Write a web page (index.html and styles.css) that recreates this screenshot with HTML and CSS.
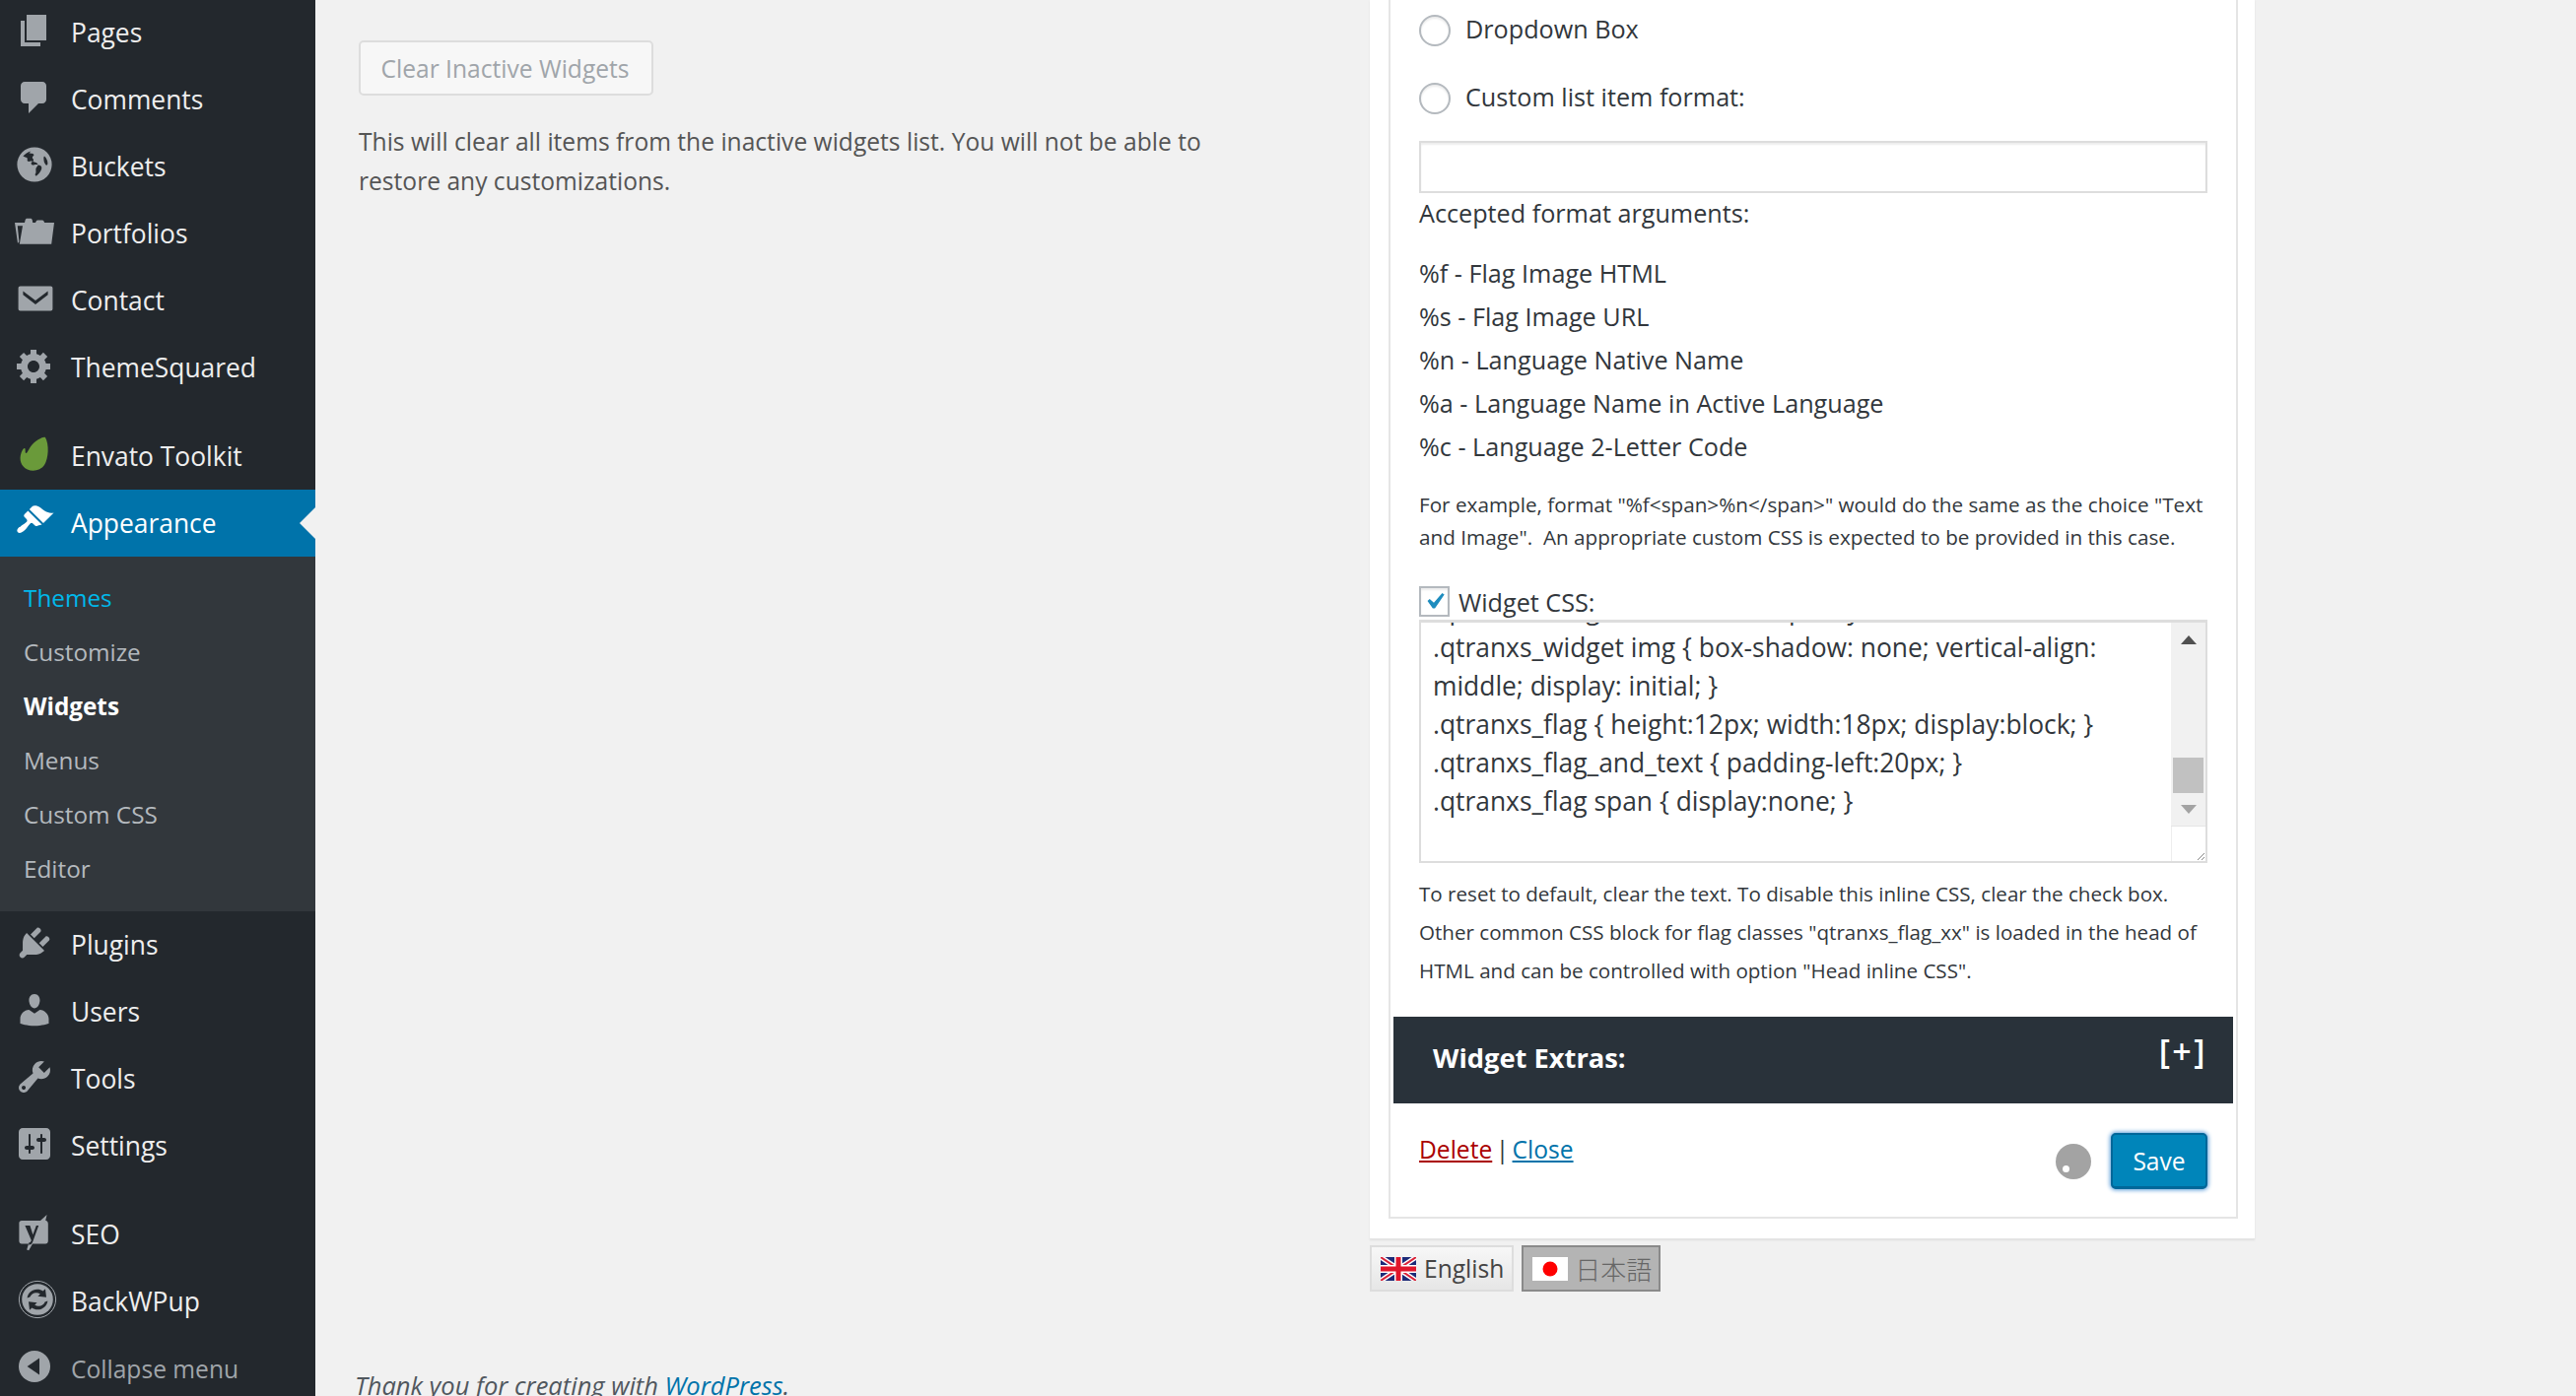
FILE: index.html
```html
<!DOCTYPE html>
<html lang="en">
<head>
<meta charset="utf-8">
<title>Widgets</title>
<link rel="stylesheet" href="styles.css">
</head>
<body>
<div class="page">
  <nav class="sidebar">
    <a class="item"><svg class="ic" viewBox="0 0 20 20"><path d="M6 15V2h10v13H6zm-1 1h8v2H3V5h2v11z"/></svg><span>Pages</span></a>
    <a class="item"><svg class="ic" viewBox="0 0 20 20"><path d="M5 2h9c1.1 0 2 .9 2 2v7c0 1.1-.9 2-2 2h-2l-5 5v-5H5c-1.1 0-2-.9-2-2V4c0-1.1.9-2 2-2z"/></svg><span>Comments</span></a>
    <a class="item"><svg class="ic" viewBox="0 0 20 20"><path fill-rule="evenodd" d="M10 1.2a8.8 8.8 0 1 1 0 17.6 8.8 8.8 0 0 1 0-17.6zM8.2 3.2C6.6 3.6 5.2 4.5 4.2 5.8c.6.5 1.5.4 2 .8.6.5-.2 1.2.3 1.7.7.6 1.500-.4 2.300.1.9.5 2.300.4 2.800 1.300.5 1-.8 1.500-.9 2.500-.1.9.3 1.800-.3 2.600-.2.4.1 1.200.6.900 1.200-.8 2-2 2.500-3.200.2-.7.300-1.500-.4-1.900-1-.5-2.400-.9-3.400-.4-.7.3-1.500-.3-1.400-1 .1-.6 1-.6 1.200-1.200.2-.7-.7-1-.6-1.700.1-.6.900-.6.800-1.300-.1-.6-1.900-.7-2.500-.8zM15 5.800c-.6.600-.2 1.600-.2 2.400.1.800.7 1.400 1 2.100.5.300.9-.3.900-.8 0-1.400-.6-2.700-1.700-3.700z"/></svg><span>Buckets</span></a>
    <a class="item"><svg class="ic" viewBox="0 0 20 20"><path d="M0 5.500h5l.3-1.300c.1-.5.500-.8 1-.8h1.600c.5 0 .9.300 1 .8l.2 1.300h1.400l.3-.6c.2-.4.500-.6.900-.6h2.200c.4 0 .7.200.9.600l.3.600H20l-1.400 10.900H2.400L4 7.100H1.400l.8 8-.7.9z"/></svg><span>Portfolios</span></a>
    <a class="item"><svg class="ic" viewBox="0 0 20 20"><path d="M2.800 3.800h15.400c.6 0 1 .4 1 1v10.400c0 .6-.4 1-1 1H2.800c-.6 0-1-.4-1-1V4.800c0-.6.400-1 1-1zM4.200 6.200 10.500 11l6.300-4.800v1.900L10.500 13 4.200 8.100z" fill-rule="evenodd"/></svg><span>Contact</span></a>
    <a class="item"><svg class="ic" viewBox="0 0 20 20"><path d="M18 12h-2.180c-.17.7-.44 1.350-.81 1.930l1.540 1.540-2.100 2.100-1.540-1.540c-.58.36-1.230.63-1.910.79V19H8v-2.180c-.68-.16-1.330-.43-1.910-.79l-1.540 1.540-2.120-2.120 1.540-1.540c-.36-.58-.63-1.230-.79-1.910H1V9.030h2.170c.16-.7.44-1.350.8-1.940L2.430 5.550l2.100-2.100 1.540 1.540c.58-.37 1.240-.64 1.930-.81V2h3v2.180c.68.16 1.330.43 1.910.79l1.540-1.540 2.120 2.120-1.540 1.540c.36.59.64 1.240.8 1.940H18V12zm-8.500 1.500c1.660 0 3-1.340 3-3s-1.340-3-3-3-3 1.340-3 3 1.340 3 3 3z"/></svg><span>ThemeSquared</span></a>
    <a class="item item-sep"><svg class="ic ic-leaf" viewBox="0 0 20 20"><path d="M15.500 1.500c2 3.500 1.700 10.700-.5 14-1.700 2.600-5.600 3.600-8.600 2.200C3.200 16.200 2 12.800 3.300 9.200c.5-1.300 1.200-2.300 1.700-2.200.6.100.1 2.400.7 2.500.9 0 1.500-2.900 4-5.200 1.800-1.600 4.700-3.500 5.800-2.800z"/></svg><span>Envato Toolkit</span></a>
    <a class="item item-current"><svg class="ic" viewBox="0 0 20 20"><path d="M14.480 11.060L7.410 3.990l1.500-1.500c.5-.56 2.300-.47 3.510.32 1.210.8 1.430 1.280 2.910 2.100 1.180.64 2.450 1.260 4.450.85zm-.71.71L6.700 4.700 4.930 6.470c-.39.39-.39 1.020 0 1.410l1.060 1.060c.39.39.39 1.030 0 1.420-.6.6-1.430 1.110-2.210 1.690-.35.26-.7.53-1.010.84C1.430 13.230.76 14.860 1.530 15.640c.77.78 2.400.1 3.740-1.230.32-.31.59-.66.85-1.010.58-.78 1.090-1.610 1.690-2.210.39-.39 1.020-.39 1.410 0l1.060 1.060c.39.39 1.020.39 1.410 0z"/></svg><span>Appearance</span><i class="notch"></i></a>
    <div class="submenu">
      <a class="sub sub-link">Themes</a>
      <a class="sub">Customize</a>
      <a class="sub sub-on">Widgets</a>
      <a class="sub">Menus</a>
      <a class="sub">Custom CSS</a>
      <a class="sub">Editor</a>
    </div>
    <a class="item"><svg class="ic" viewBox="0 0 20 20"><path d="M13.110 4.360L9.870 7.600 8 5.730l3.240-3.240c.35-.34 1.050-.2 1.560.32.52.51.66 1.210.31 1.550zm-8 1.770l.91-1.120 9.010 9.010-1.190.84c-.71.71-2.630 1.160-3.820 1.160H6.140L4.900 17.260c-.59.59-1.540.59-2.120 0-.59-.58-.59-1.530 0-2.120l1.240-1.240v-3.880c0-1.130.4-3.190 1.090-3.890zm7.260 3.970l3.240-3.240c.34-.35 1.040-.21 1.550.31.52.51.66 1.210.31 1.550l-3.240 3.250z"/></svg><span>Plugins</span></a>
    <a class="item"><svg class="ic" viewBox="0 0 20 20"><path d="M10 9.250c-2.270 0-2.730-3.440-2.730-3.440C7 4.020 7.820 2 9.970 2c2.160 0 2.980 2.020 2.710 3.810 0 0-.41 3.440-2.680 3.440zm0 2.570L12.720 10c2.390 0 4.520 2.330 4.520 4.530v2.490s-3.650 1.130-7.240 1.130c-3.650 0-7.240-1.130-7.240-1.130v-2.490c0-2.250 1.940-4.480 4.470-4.480z"/></svg><span>Users</span></a>
    <a class="item"><svg class="ic" viewBox="0 0 20 20"><path d="M16.680 9.770c-1.340 1.340-3.300 1.670-4.950.99l-5.410 6.520c-.99.99-2.590.99-3.580 0s-.99-2.590 0-3.570l6.520-5.420c-.68-1.650-.35-3.610.99-4.950 1.280-1.280 3.120-1.620 4.720-1.060l-2.890 2.890 2.820 2.820 2.860-2.870c.53 1.580.18 3.390-1.080 4.650zM3.810 16.210c.4.390 1.040.39 1.430 0 .4-.4.4-1.040 0-1.430-.39-.4-1.030-.4-1.430 0-.39.390-.39 1.030 0 1.430z"/></svg><span>Tools</span></a>
    <a class="item"><svg class="ic" viewBox="0 0 20 20"><path d="M18 16V4c0-1.100-.9-2-2-2H4c-1.100 0-2 .9-2 2v12c0 1.100.9 2 2 2h12c1.100 0 2-.9 2-2zM8 11h1c.55 0 1 .45 1 1s-.45 1-1 1H8v1.500c0 .28-.22.5-.5.5s-.5-.22-.5-.5V13H6c-.55 0-1-.45-1-1s.45-1 1-1h1V5.500c0-.28.22-.5.5-.5s.5.22.5.5V11zm5-2h-1c-.55 0-1-.45-1-1s.45-1 1-1h1V5.500c0-.28.22-.5.5-.5s.5.22.5.5V7h1c.55 0 1 .45 1 1s-.45 1-1 1h-1v5.500c0 .28-.22.5-.5.5s-.5-.22-.5-.5V9z"/></svg><span>Settings</span></a>
    <a class="item item-sep"><svg class="ic" viewBox="0 0 20 20"><path d="M3.500 4h9.500L16.300 1l-.7 2.900c.9.200 1.300.8 1.300 1.700v8.800c0 .8-.5 1.300-1.300 1.300H9l-1.900 3.400-1-.3.900-3.100H3.500c-.8 0-1.300-.5-1.300-1.300V5.300C2.200 4.500 2.700 4 3.500 4z"/><path class="cut" d="M5.200 6.500h2.500l1.500 4.600 1.700-4.600h1.200l-3 8.300c-.4 1.100-1 1.500-2 1.400v-1c.7 0 1.100-.5 1.300-1.200L5.200 6.500z"/></svg><span>SEO</span></a>
    <a class="item"><svg class="ic ic-bwp" viewBox="0 0 20 20"><circle class="ring" cx="10" cy="10" r="9.300"/><circle cx="10" cy="10" r="7.900"/><path class="cut" d="M4.800 9.300c.3-2.600 2.600-4.500 5.200-4.400 1 0 2 .3 2.800.9l1.200-1.200.5 4.300-4.300-.5 1.200-1.200c-.6-.4-1.300-.6-2-.6-1.500 0-2.800 1-3.200 2.200zM15.200 10.700c-.3 2.600-2.600 4.500-5.200 4.400-1 0-2-.3-2.800-.9L6 15.400l-.5-4.300 4.300.5-1.200 1.200c.6.400 1.300.6 2 .6 1.500 0 2.800-1 3.200-2.200z"/></svg><span>BackWPup</span></a>
    <a class="item item-collapse"><svg class="ic" viewBox="0 0 20 20"><circle cx="10" cy="10" r="8"/><path class="cut" d="M12.500 5.800v8.400L6.300 10z"/></svg><span>Collapse menu</span></a>
  </nav>

  <main class="content">
    <div class="columns">
      <section class="left">
        <button class="btn-clear" type="button">Clear Inactive Widgets</button>
        <p class="clear-note">This will clear all items from the inactive widgets list. You will not be able to<br>restore any customizations.</p>
      </section>
      <section class="right">
        <div class="outer">
          <div class="inner">
            <div class="form">
              <label class="radio-row"><i class="radio"></i><span class="lift">Dropdown Box</span></label>
              <label class="radio-row radio-row-2"><i class="radio"></i><span class="lift">Custom list item format:</span></label>
              <div class="text-input"></div>
              <p class="accepted">Accepted format arguments:</p>
              <ul class="args">
                <li>%f - Flag Image HTML</li>
                <li>%s - Flag Image URL</li>
                <li>%n - Language Native Name</li>
                <li>%a - Language Name in Active Language</li>
                <li>%c - Language 2-Letter Code</li>
              </ul>
              <p class="example">For example, format "%f&lt;span&gt;%n&lt;/span&gt;" would do the same as the choice "Text<br>and Image".&nbsp; An appropriate custom CSS is expected to be provided in this case.</p>
              <label class="check-row"><i class="checkbox"><svg viewBox="0 0 20 20"><path d="M14.830 4.890l1.340.94-5.810 8.380H9.020L5.780 9.670l1.340-1.250 2.570 2.400z"/></svg></i>Widget CSS:</label>
              <div class="code">
                <div class="code-pane">
                  <div class="code-text">.qtranxs_widget ul li:hover { opacity: 1; }<br>.qtranxs_widget img { box-shadow: none; vertical-align:<br>middle; display: initial; }<br>.qtranxs_flag { height:12px; width:18px; display:block; }<br>.qtranxs_flag_and_text { padding-left:20px; }<br>.qtranxs_flag span { display:none; }</div>
                </div>
                <div class="scroll">
                  <div class="track">
                    <i class="tri tri-up"></i>
                    <i class="thumb"></i>
                    <i class="tri tri-down"></i>
                  </div>
                  <div class="corner"><svg viewBox="0 0 14 14"><path d="M13 6 6 13M13 10l-3 3"/></svg></div>
                </div>
              </div>
              <p class="hint">To reset to default, clear the text. To disable this inline CSS, clear the check box.<br>Other common CSS block for flag classes "qtranxs_flag_xx" is loaded in the head of<br>HTML and can be controlled with option "Head inline CSS".</p>
            </div>
            <div class="extras"><span class="extras-title">Widget Extras:</span><span class="extras-toggle">[+]</span></div>
            <div class="actions">
              <div class="links"><a class="del">Delete</a> | <a class="close">Close</a></div>
              <div class="save-wrap"><i class="spinner"><b></b></i><button class="btn-save" type="button">Save</button></div>
            </div>
          </div>
        </div>
        <div class="langs">
          <a class="lang">
            <svg class="flag" viewBox="0 0 36 24"><rect width="36" height="24" fill="#1c2a78"/><path d="M0 0l36 24M36 0L0 24" stroke="#fff" stroke-width="5"/><path d="M0 0l36 24M36 0L0 24" stroke="#d9233a" stroke-width="2"/><path d="M18 0v24M0 12h36" stroke="#fff" stroke-width="8"/><path d="M18 0v24M0 12h36" stroke="#e0162b" stroke-width="5"/></svg>English</a>
          <a class="lang lang-on">
            <svg class="flag" viewBox="0 0 36 24"><rect width="36" height="24" fill="#fff"/><circle cx="18" cy="12" r="7.500" fill="#f00"/></svg><span class="ja">日本語</span></a>
        </div>
      </section>
    </div>
    <footer class="foot">Thank you for creating with <a>WordPress</a>.</footer>
  </main>
</div>
</body>
</html>
```
FILE: styles.css
```css
* { box-sizing: border-box; }
html, body { margin: 0; height: 100%; overflow: hidden; }
body { background: #f1f1f1; color: #444; font-family: "Open Sans", "Noto Sans", "Liberation Sans", sans-serif; font-size: 24.6px; }
p, ul { margin: 0; padding: 0; list-style: none; }
i { display: block; font-style: normal; }
.page { display: flex; height: 1417px; }

.sidebar { width: 320px; flex: none; background: #23282d; margin-top: -1px; height: 1418px; overflow: hidden; }
.item { position: relative; display: flex; align-items: center; height: 68px; padding-left: 15px; gap: 17px; color: #eee; font-size: 26.4px; }
.ic { width: 40px; height: 40px; flex: none; fill: #a0a5aa; margin-top: -4px; }
.ic .cut { fill: #23282d; }
.ic-leaf { fill: #6a9a3a; }
.ic-bwp { margin-left: 3px; margin-right: -3px; }
.ic-bwp .ring { fill: none; stroke: #a0a5aa; stroke-width: .5; }
.item-sep { margin-top: 22px; }
.item-current { background: #0073aa; color: #fff; }
.item-current .ic { fill: #fff; }
.notch { position: absolute; right: 0; top: 18px; border: 16px solid transparent; border-right-color: #f1f1f1; border-left-width: 0; }
.item-collapse { color: #a0a5aa; font-size: 24.6px; }
.submenu { background: #32373c; padding: 14px 0 16px; }
.sub { display: block; height: 55px; line-height: 55px; padding-left: 24px; color: #b4b9be; font-size: 24.3px; }
.sub-link { color: #00b9eb; }
.sub-on { color: #fff; font-weight: 700; }

.content { flex: 1; min-width: 0; display: flex; flex-direction: column; }
.columns { display: flex; flex: none; height: 1392px; }
.left { width: 1070px; flex: none; padding: 41px 0 0 44px; }
.btn-clear { display: block; width: 299px; height: 56px; padding: 0 2px 0 0; background: #f7f7f7; border: 2px solid #ddd; border-radius: 5px; color: #a0a5aa; font: inherit; }
.clear-note { margin-top: 27px; line-height: 39.5px; color: #555; white-space: nowrap; }

.right { width: 898px; flex: none; }
.outer { background: #fff; height: 1258px; padding: 0 17px 21px 19px; border-bottom: 1px solid #e3e3e3; box-shadow: 0 1px 2px rgba(0,0,0,.08); }
.inner { height: 1237px; border: 2px solid #e5e5e5; border-top: 0; padding: 0 3px; display: flex; flex-direction: column; }
.form { padding: 15px 26px 0; height: 1032px; color: #32373c; font-size: 25.2px; }
.radio-row { display: flex; align-items: center; height: 31px; gap: 15px; }
.radio-row-2 { margin-top: 38px; }
.lift { padding-bottom: 3px; }
.radio { width: 32px; height: 32px; flex: none; border: 2px solid #b4b9be; border-radius: 50%; background: #fff; box-shadow: inset 0 2px 2px rgba(0,0,0,.08); }
.text-input { margin-top: 28px; height: 53px; border: 2px solid #ddd; box-shadow: inset 0 2px 2px rgba(0,0,0,.07); }
.accepted { line-height: 39px; margin-top: 1px; }
.args { margin-top: 19px; }
.args li { line-height: 44px; }
.example { margin-top: 21px; font-size: 20.7px; line-height: 33px; white-space: nowrap; }
.check-row { display: flex; align-items: center; gap: 9px; margin-top: 32px; height: 33px; }
.checkbox { width: 31px; height: 31px; flex: none; border: 2px solid #b4b9be; background: #fff; box-shadow: inset 0 2px 2px rgba(0,0,0,.08); }
.checkbox svg { display: block; width: 33px; height: 33px; margin: -3px 0 0 -3px; fill: #1e8cbe; }
.code { display: flex; height: 247px; margin-top: 2px; border: 2px solid #ddd; border-top-width: 3px; background: #fff; }
.code-pane { flex: 1; overflow: hidden; padding-left: 12px; }
.code-text { margin-top: -33px; line-height: 39px; white-space: nowrap; font-size: 26.4px; }
.scroll { width: 35px; flex: none; display: flex; flex-direction: column; }
.track { height: 207px; background: #f1f1f1; display: flex; flex-direction: column; align-items: center; border-bottom: 1px solid #e5e5e5; }
.tri { width: 0; height: 0; border-left: 8px solid transparent; border-right: 8px solid transparent; }
.tri-up { margin-top: 13px; border-bottom: 9px solid #505050; }
.thumb { width: 31px; height: 36px; margin-top: 115px; background: #c1c1c1; }
.tri-down { margin-top: 12px; border-top: 9px solid #a3a3a3; }
.corner { flex: 1; position: relative; border-left: 1px solid #eee; }
.corner svg { position: absolute; right: 0; bottom: 0; width: 14px; height: 14px; fill: none; stroke: #888; stroke-width: 1; }
.hint { margin-top: 12px; font-size: 20.6px; line-height: 39px; white-space: nowrap; }

.extras { flex: none; height: 88px; background: #29323a; color: #fff; display: flex; justify-content: space-between; padding: 0 26px 0 40px; }
.extras-title { font-size: 27.3px; font-weight: 700; line-height: 83px; }
.extras-toggle { font-size: 34px; font-weight: 600; line-height: 70px; letter-spacing: 2.5px; }
.actions { flex: 1; display: flex; justify-content: space-between; padding: 30px 26px 0; }
.links { line-height: 34px; color: #32373c; word-spacing: -3px; }
.del { color: #a00; text-decoration: underline; }
.close { color: #0073aa; text-decoration: underline; }
.save-wrap { display: flex; align-items: center; gap: 20px; height: 57px; }
.spinner { position: relative; width: 36px; height: 36px; border-radius: 50%; background: #a3a3a3; }
.spinner b { position: absolute; left: 7px; bottom: 7px; width: 7px; height: 7px; border-radius: 50%; background: #fff; }
.btn-save { width: 98px; height: 57px; padding: 0; background: #0085ba; border: 2px solid #006799; border-bottom-width: 3px; border-radius: 5px; color: #fff; font: inherit; box-shadow: 0 0 4px 1px #5b9dd9; }

.langs { display: flex; gap: 8px; margin-top: 6px; }
.lang { display: flex; align-items: center; height: 47px; padding: 0 8px 0 9px; gap: 8px; border: 2px solid #ddd; background: linear-gradient(#f7f7f7, #e6e6e6); color: #444; }
.lang-on { background: #b4b4b4; border-color: #8a8a8a; color: #666; gap: 7px; padding-right: 7px; }
.flag { width: 36px; height: 24px; flex: none; display: block; }
.ja { font-family: "Noto Sans CJK JP", sans-serif; font-weight: 300; font-size: 26px; }

.foot { padding-left: 40px; font-style: italic; color: #50575e; line-height: 28px; font-size: 25.5px; }
.foot a { color: #0073aa; }
```
